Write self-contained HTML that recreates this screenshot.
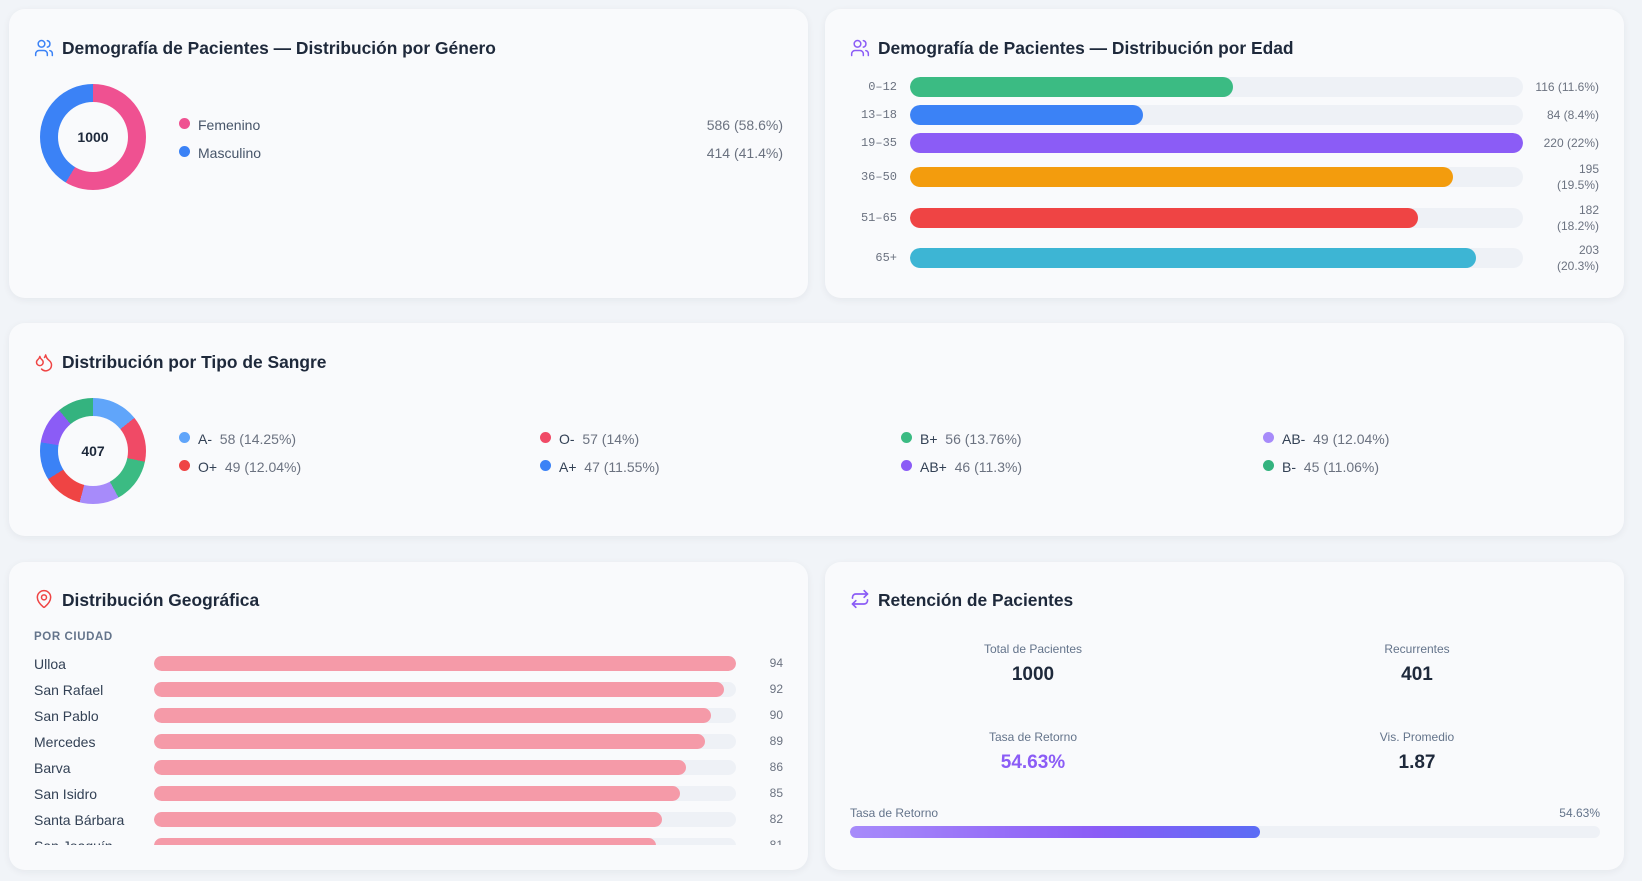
<!DOCTYPE html>
<html><head><meta charset="utf-8"><style>
*{margin:0;padding:0;box-sizing:border-box}
body{width:1642px;height:881px;background:#f1f4f8;font-family:"Liberation Sans",sans-serif;position:relative;overflow:hidden;color:#1e293b}
.card{position:absolute;background:#f9fafc;border-radius:16px;box-shadow:0 2px 8px rgba(30,41,59,.06)}
.a{position:absolute}
.title{position:absolute;font-size:17.4px;font-weight:700;color:#1e293b;white-space:nowrap;line-height:22px}
.ic{position:absolute}
.donut{position:absolute;width:106px;height:106px;border-radius:50%}
.donut .hole{position:absolute;left:18px;top:18px;width:70px;height:70px;border-radius:50%;background:#f9fafc;display:flex;align-items:center;justify-content:center;font-weight:700;font-size:14px;color:#1e293b}
.dot{position:absolute;width:11px;height:11px;border-radius:50%}
.t14{font-size:14px;color:#475569;line-height:16px;white-space:nowrap}
.g{color:#6b7280}
.track{position:absolute;background:#eef1f6;border-radius:10px;overflow:hidden}
.fill{height:100%;border-radius:10px}
.mono{font-family:"Liberation Mono",monospace;font-size:12px;color:#6b7280;white-space:nowrap}
.v12{font-size:12px;color:#6b7280;text-align:right;line-height:16px;white-space:nowrap}
</style></head><body>

<!-- Card 1 -->
<div class="card" style="left:9px;top:9px;width:799px;height:289px"></div>
<svg class="ic" style="left:34px;top:38px" width="20" height="20" viewBox="0 0 24 24" fill="none" stroke="#3b82f6" stroke-width="1.8" stroke-linecap="round"><circle cx="9" cy="7" r="4"/><path d="M2 21v-2a4 4 0 0 1 4-4h6a4 4 0 0 1 4 4v2"/><path d="M16 3.1a4 4 0 0 1 0 7.8"/><path d="M22 21v-2a4 4 0 0 0-3-3.9"/></svg>
<div class="title" style="left:62px;top:37px">Demografía de Pacientes — Distribución por Género</div>
<div class="donut" style="left:40px;top:84px;background:conic-gradient(#ef5191 0 58.6%,#3b82f6 58.6% 100%)"><div class="hole">1000</div></div>
<div class="dot" style="left:179px;top:118px;background:#ef5191"></div>
<div class="a t14" style="left:198px;top:117px">Femenino</div>
<div class="a t14 g" style="right:859px;top:117px">586 (58.6%)</div>
<div class="dot" style="left:179px;top:146px;background:#3b82f6"></div>
<div class="a t14" style="left:198px;top:145px">Masculino</div>
<div class="a t14 g" style="right:859px;top:145px">414 (41.4%)</div>

<!-- Card 2 -->
<div class="card" style="left:825px;top:9px;width:799px;height:289px"></div>
<svg class="ic" style="left:850px;top:38px" width="20" height="20" viewBox="0 0 24 24" fill="none" stroke="#8b5cf6" stroke-width="1.8" stroke-linecap="round"><circle cx="9" cy="7" r="4"/><path d="M2 21v-2a4 4 0 0 1 4-4h6a4 4 0 0 1 4 4v2"/><path d="M16 3.1a4 4 0 0 1 0 7.8"/><path d="M22 21v-2a4 4 0 0 0-3-3.9"/></svg>
<div class="title" style="left:878px;top:37px">Demografía de Pacientes — Distribución por Edad</div>

<div class="a mono" style="right:745px;top:80px">0–12</div>
<div class="track" style="left:910px;top:77px;width:613px;height:20px"><div class="fill" style="width:323px;background:#3bbb83"></div></div>
<div class="a v12" style="right:43px;top:79px">116 (11.6%)</div>

<div class="a mono" style="right:745px;top:108px">13–18</div>
<div class="track" style="left:910px;top:105px;width:613px;height:20px"><div class="fill" style="width:233px;background:#3b82f6"></div></div>
<div class="a v12" style="right:43px;top:107px">84 (8.4%)</div>

<div class="a mono" style="right:745px;top:136px">19–35</div>
<div class="track" style="left:910px;top:133px;width:613px;height:20px"><div class="fill" style="width:613px;background:#8b5cf6"></div></div>
<div class="a v12" style="right:43px;top:135px">220 (22%)</div>

<div class="a mono" style="right:745px;top:170px">36–50</div>
<div class="track" style="left:910px;top:167px;width:613px;height:20px"><div class="fill" style="width:543px;background:#f39c0d"></div></div>
<div class="a v12" style="right:43px;top:161px">195<br>(19.5%)</div>

<div class="a mono" style="right:745px;top:211px">51–65</div>
<div class="track" style="left:910px;top:208px;width:613px;height:20px"><div class="fill" style="width:508px;background:#ef4444"></div></div>
<div class="a v12" style="right:43px;top:202px">182<br>(18.2%)</div>

<div class="a mono" style="right:745px;top:251px">65+</div>
<div class="track" style="left:910px;top:248px;width:613px;height:20px"><div class="fill" style="width:566px;background:#3db5d4"></div></div>
<div class="a v12" style="right:43px;top:242px">203<br>(20.3%)</div>

<!-- Card 3 -->
<div class="card" style="left:9px;top:323px;width:1615px;height:213px"></div>
<svg class="ic" style="left:34px;top:352px" width="20" height="20" viewBox="0 0 24 24" fill="none" stroke="#ef4444" stroke-width="1.8" stroke-linecap="round" stroke-linejoin="round"><path d="M7 16.3c2.2 0 4-1.8 4-4 0-1.2-.6-2.3-1.7-3.2S7.4 6.9 7 5.3c-.4 1.6-1.3 3-2.3 3.8S3 11.1 3 12.3c0 2.2 1.8 4 4 4z"/><path d="M12.6 6.6A11 11 0 0 0 14 3.5c.5 2.5 2 4.9 4 6.5s3 3.5 3 5.5a6.98 6.98 0 0 1-11.9 5"/></svg>
<div class="title" style="left:62px;top:351px">Distribución por Tipo de Sangre</div>
<div class="donut" style="left:40px;top:398px;background:conic-gradient(#60a5fa 0 14.25%,#f04a66 14.25% 28.25%,#3bbb83 28.25% 42.01%,#a78bfa 42.01% 54.05%,#ef4444 54.05% 66.09%,#3b82f6 66.09% 77.64%,#8b5cf6 77.64% 88.94%,#34b37f 88.94% 100%)"><div class="hole">407</div></div>

<div class="dot" style="left:179px;top:432px;background:#60a5fa"></div>
<div class="a t14" style="left:198px;top:431px"><span style="color:#334155">A-</span>&nbsp; <span class="g">58 (14.25%)</span></div>
<div class="dot" style="left:179px;top:460px;background:#ef4444"></div>
<div class="a t14" style="left:198px;top:459px"><span style="color:#334155">O+</span>&nbsp; <span class="g">49 (12.04%)</span></div>

<div class="dot" style="left:540px;top:432px;background:#f04a66"></div>
<div class="a t14" style="left:559px;top:431px"><span style="color:#334155">O-</span>&nbsp; <span class="g">57 (14%)</span></div>
<div class="dot" style="left:540px;top:460px;background:#3b82f6"></div>
<div class="a t14" style="left:559px;top:459px"><span style="color:#334155">A+</span>&nbsp; <span class="g">47 (11.55%)</span></div>

<div class="dot" style="left:901px;top:432px;background:#3bbb83"></div>
<div class="a t14" style="left:920px;top:431px"><span style="color:#334155">B+</span>&nbsp; <span class="g">56 (13.76%)</span></div>
<div class="dot" style="left:901px;top:460px;background:#8b5cf6"></div>
<div class="a t14" style="left:920px;top:459px"><span style="color:#334155">AB+</span>&nbsp; <span class="g">46 (11.3%)</span></div>

<div class="dot" style="left:1263px;top:432px;background:#a78bfa"></div>
<div class="a t14" style="left:1282px;top:431px"><span style="color:#334155">AB-</span>&nbsp; <span class="g">49 (12.04%)</span></div>
<div class="dot" style="left:1263px;top:460px;background:#34b37f"></div>
<div class="a t14" style="left:1282px;top:459px"><span style="color:#334155">B-</span>&nbsp; <span class="g">45 (11.06%)</span></div>

<!-- Card 4 -->
<div class="card" style="left:9px;top:562px;width:799px;height:308px"></div>
<svg class="ic" style="left:34px;top:589px" width="20" height="20" viewBox="0 0 24 24" fill="none" stroke="#ef4444" stroke-width="1.8" stroke-linecap="round" stroke-linejoin="round"><path d="M20 10c0 5-5.5 10.2-7.4 11.8a1 1 0 0 1-1.2 0C9.5 20.2 4 15 4 10a8 8 0 0 1 16 0"/><circle cx="12" cy="10" r="3"/></svg>
<div class="title" style="left:62px;top:589px">Distribución Geográfica</div>
<div class="a" style="left:34px;top:631px;font-size:11.5px;font-weight:700;color:#64748b;letter-spacing:.6px">POR CIUDAD</div>
<div class="a" style="left:0;top:650px;width:808px;height:195px;overflow:hidden">
 <div class="a t14" style="left:34px;top:6px;color:#334155">Ulloa</div><div class="track" style="left:154px;top:6px;width:582px;height:15px"><div class="fill" style="width:582px;background:#f59aa8"></div></div><div class="a v12" style="right:25px;top:5px">94</div>
 <div class="a t14" style="left:34px;top:32px;color:#334155">San Rafael</div><div class="track" style="left:154px;top:32px;width:582px;height:15px"><div class="fill" style="width:570px;background:#f59aa8"></div></div><div class="a v12" style="right:25px;top:31px">92</div>
 <div class="a t14" style="left:34px;top:58px;color:#334155">San Pablo</div><div class="track" style="left:154px;top:58px;width:582px;height:15px"><div class="fill" style="width:557px;background:#f59aa8"></div></div><div class="a v12" style="right:25px;top:57px">90</div>
 <div class="a t14" style="left:34px;top:84px;color:#334155">Mercedes</div><div class="track" style="left:154px;top:84px;width:582px;height:15px"><div class="fill" style="width:551px;background:#f59aa8"></div></div><div class="a v12" style="right:25px;top:83px">89</div>
 <div class="a t14" style="left:34px;top:110px;color:#334155">Barva</div><div class="track" style="left:154px;top:110px;width:582px;height:15px"><div class="fill" style="width:532px;background:#f59aa8"></div></div><div class="a v12" style="right:25px;top:109px">86</div>
 <div class="a t14" style="left:34px;top:136px;color:#334155">San Isidro</div><div class="track" style="left:154px;top:136px;width:582px;height:15px"><div class="fill" style="width:526px;background:#f59aa8"></div></div><div class="a v12" style="right:25px;top:135px">85</div>
 <div class="a t14" style="left:34px;top:162px;color:#334155">Santa Bárbara</div><div class="track" style="left:154px;top:162px;width:582px;height:15px"><div class="fill" style="width:508px;background:#f59aa8"></div></div><div class="a v12" style="right:25px;top:161px">82</div>
 <div class="a t14" style="left:34px;top:188px;color:#334155">San Joaquín</div><div class="track" style="left:154px;top:188px;width:582px;height:15px"><div class="fill" style="width:502px;background:#f59aa8"></div></div><div class="a v12" style="right:25px;top:187px">81</div>
</div>

<!-- Card 5 -->
<div class="card" style="left:825px;top:562px;width:799px;height:308px"></div>
<svg class="ic" style="left:850px;top:589px" width="20" height="20" viewBox="0 0 24 24" fill="none" stroke="#8b5cf6" stroke-width="2" stroke-linecap="round" stroke-linejoin="round"><path d="m17 2 4 4-4 4"/><path d="M3 11v-1a4 4 0 0 1 4-4h14"/><path d="m7 22-4-4 4-4"/><path d="M21 13v1a4 4 0 0 1-4 4H3"/></svg>
<div class="title" style="left:878px;top:589px">Retención de Pacientes</div>
<div class="a" style="left:933px;top:642px;width:200px;text-align:center;font-size:12px;color:#64748b">Total de Pacientes</div>
<div class="a" style="left:933px;top:664px;width:200px;text-align:center;font-size:19px;font-weight:700;color:#1e293b">1000</div>
<div class="a" style="left:1317px;top:642px;width:200px;text-align:center;font-size:12px;color:#64748b">Recurrentes</div>
<div class="a" style="left:1317px;top:664px;width:200px;text-align:center;font-size:19px;font-weight:700;color:#1e293b">401</div>
<div class="a" style="left:933px;top:730px;width:200px;text-align:center;font-size:12px;color:#64748b">Tasa de Retorno</div>
<div class="a" style="left:933px;top:752px;width:200px;text-align:center;font-size:19px;font-weight:700;color:#8b5cf6">54.63%</div>
<div class="a" style="left:1317px;top:730px;width:200px;text-align:center;font-size:12px;color:#64748b">Vis. Promedio</div>
<div class="a" style="left:1317px;top:752px;width:200px;text-align:center;font-size:19px;font-weight:700;color:#1e293b">1.87</div>
<div class="a" style="left:850px;top:806px;font-size:12px;color:#64748b">Tasa de Retorno</div>
<div class="a" style="right:42px;top:806px;font-size:12px;color:#64748b">54.63%</div>
<div class="track" style="left:850px;top:826px;width:750px;height:12px"><div class="fill" style="width:410px;background:linear-gradient(90deg,#a78bfa,#8b5cf6 60%,#5b6cf5)"></div></div>

</body></html>
